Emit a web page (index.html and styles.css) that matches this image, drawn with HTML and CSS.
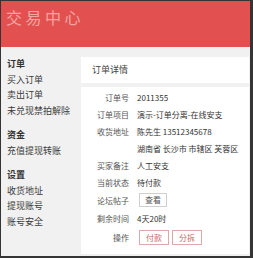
FILE: index.html
```html
<!DOCTYPE html>
<html lang="zh">
<head>
<meta charset="utf-8">
<link rel="stylesheet" href="styles.css">
</head>
<body>
<div class="frame">
  <header class="topbar"><h1 class="title">交易中心</h1></header>
  <div class="layout">
    <nav class="sidebar">
      <div class="group">
        <div class="heading">订单</div>
        <div class="item">买入订单</div>
        <div class="item">卖出订单</div>
        <div class="item">未兑现禁拍解除</div>
      </div>
      <div class="group">
        <div class="heading">资金</div>
        <div class="item">充值提现转账</div>
      </div>
      <div class="group">
        <div class="heading">设置</div>
        <div class="item">收货地址</div>
        <div class="item">提现账号</div>
        <div class="item">账号安全</div>
      </div>
    </nav>
    <main class="main">
      <div class="panel-head">订单详情</div>
      <div class="panel-body">
        <div class="row"><span class="label">订单号</span><span class="value">2011355</span></div>
        <div class="row"><span class="label">订单项目</span><span class="value">演示-订单分离-在线安支</span></div>
        <div class="row"><span class="label">收货地址</span><span class="value">陈先生 13512345678</span></div>
        <div class="row"><span class="label"></span><span class="value">湖南省 长沙市 市辖区 芙蓉区</span></div>
        <div class="row"><span class="label">买家备注</span><span class="value">人工安支</span></div>
        <div class="row"><span class="label">当前状态</span><span class="value">待付款</span></div>
        <div class="row tall"><span class="label">论坛帖子</span><span class="value"><span class="btn">查看</span></span></div>
        <div class="row tall"><span class="label">剩余时间</span><span class="value">4天20时</span></div>
        <div class="row taller"><span class="label">操作</span><span class="value actions"><span class="btn red">付款</span><span class="btn red">分拆</span></span></div>
      </div>
    </main>
  </div>
</div>
</body>
</html>
```
FILE: styles.css
```css
* { box-sizing: border-box; }
html, body { margin: 0; padding: 0; }
body {
  width: 253px;
  height: 258px;
  overflow: hidden;
  font-family: "Noto Sans CJK SC", "Liberation Sans", sans-serif;
}
.frame {
  width: 253px;
  height: 258px;
  border-style: solid;
  border-color: #353535;
  border-width: 1px 3px 2px 1px;
  background: #f1f1f1;
  display: flex;
  flex-direction: column;
}
.topbar {
  height: 46px;
  background: #e2514f;
  padding: 5px 0 0 5px;
  flex: none;
}
.title {
  margin: 0;
  font-size: 16px;
  font-weight: normal;
  letter-spacing: 3.5px;
  line-height: 22px;
  color: #f2a4a2;
}
.layout {
  flex: 1;
  display: flex;
  min-height: 0;
}
.sidebar {
  width: 80px;
  flex: none;
  padding: 9px 0 0 6px;
  font-size: 9px;
  line-height: 15.5px;
  color: #3a3a3a;
}
.group { margin-bottom: 9px; }
.heading { font-weight: bold; color: #333; }
.main {
  flex: 1;
  display: flex;
  flex-direction: column;
  padding: 10px 1px 2px 0;
  gap: 4px;
}
.panel-head {
  background: #fff;
  height: 26px;
  line-height: 26px;
  padding-left: 11px;
  font-size: 9px;
  color: #444;
  flex: none;
}
.panel-body {
  background: #fff;
  flex: 1;
  padding-top: 2px;
  font-size: 8px;
  color: #333;
}
.row {
  display: flex;
  align-items: center;
  height: 17px;
  gap: 8px;
}
.row.tall { height: 18.5px; }
.row.taller { height: 19px; }
.label {
  width: 48px;
  flex: none;
  text-align: right;
  color: #555;
}
.value { white-space: nowrap; }
.actions { display: flex; gap: 3px; }
.btn {
  display: inline-block;
  height: 14px;
  line-height: 12px;
  padding: 0 5px;
  border: 1px solid #cfcfcf;
  color: #555;
  margin-left: 2px;
}
.actions .btn { margin-left: 0; }
.actions .btn:first-child { margin-left: 2px; }
.btn.red {
  height: 15px;
  line-height: 13px;
  padding: 0 6px;
  border-color: #dca9a8;
  color: #c76565;
}
```
